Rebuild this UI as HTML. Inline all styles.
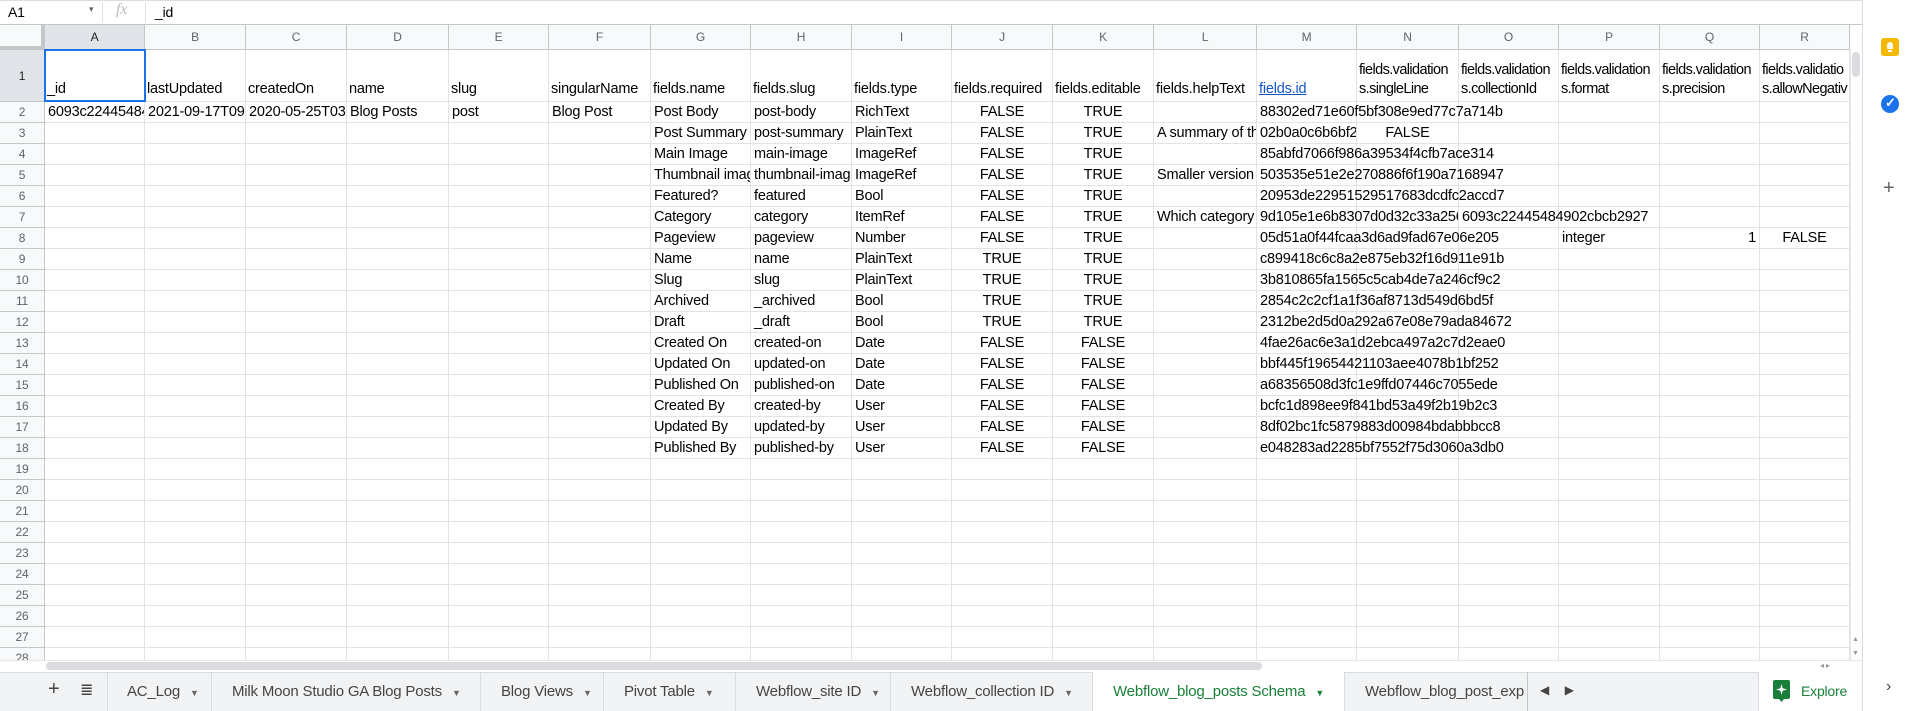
<!DOCTYPE html>
<html><head><meta charset="utf-8"><style>
*{box-sizing:border-box;margin:0;padding:0}
body{width:1914px;height:711px;overflow:hidden;background:#fff;font-family:"Liberation Sans",Arial,sans-serif;font-size:14.5px;letter-spacing:-0.2px;color:#000;position:relative}
.a{position:absolute}
.c{position:absolute;white-space:nowrap;overflow:hidden;padding:0 3px;line-height:21px}
.h{position:absolute;top:25px;height:25px;line-height:25px;text-align:center;color:#5f6368;font-size:12px;background:#f8f9fa;border-right:1px solid #c4c7c5;border-bottom:1px solid #c4c7c5}
.rh{position:absolute;left:0;width:45px;text-align:center;color:#5f6368;font-size:12px;background:#f8f9fa;border-right:1px solid #c4c7c5;border-bottom:1px solid #c4c7c5}
.tab{position:absolute;top:672px;height:39px;line-height:39px;font-size:15px;color:#444;border-right:1px solid #dadce0;padding-left:20px;white-space:nowrap;overflow:hidden}
.tab .dd{font-size:9px;color:#666;margin-left:10px}
</style></head><body>
<div class="a" style="left:0;top:0;width:1862px;height:1px;background:#dadce0"></div>
<div class="a" style="left:8px;top:4px;font-size:14px">A1</div>
<div class="a" style="left:89px;top:4px;font-size:9px;color:#666">▾</div>
<div class="a" style="left:102px;top:3px;width:1px;height:20px;background:#e0e0e0"></div>
<div class="a" style="left:116px;top:1px;font-family:'Liberation Serif',serif;font-style:italic;color:#bbb;font-size:16px">fx</div>
<div class="a" style="left:145px;top:3px;width:1px;height:20px;background:#e0e0e0"></div>
<div class="a" style="left:155px;top:4px;font-size:14px">_id</div>
<div class="a" style="left:0;top:24px;width:1862px;height:1px;background:#c4c7c5"></div>
<div id="g"></div>
<div class="a" style="left:1850px;top:50px;width:12px;height:612px;background:#fff;border-left:1px solid #e6e6e6"></div>
<div class="a" style="left:1852px;top:52px;width:8px;height:25px;background:#dadce0;border-radius:4px"></div>
<div class="a" style="left:1852px;top:636px;font-size:7px;color:#999">▲</div>
<div class="a" style="left:1852px;top:650px;font-size:7px;color:#999">▼</div>
<div class="a" style="left:0;top:660px;width:1862px;height:12px;background:#fff;border-top:1px solid #e6e6e6"></div>
<div class="a" style="left:46px;top:662px;width:1216px;height:8px;background:#dadce0;border-radius:4px"></div>
<div class="a" style="left:1820px;top:661px;font-size:8px;color:#999">◂ ▸</div>
<div class="a" style="left:0;top:672px;width:1862px;height:39px;background:#f1f3f4;border-top:1px solid #dadce0"></div>
<div class="a" style="left:48px;top:678px;font-size:20px;color:#444">+</div>
<div class="a" style="left:80px;top:680px;font-size:16px;color:#444">≣</div>
<div class="a" style="left:107px;top:672px;width:1px;height:39px;background:#dadce0"></div>
<div class="tab" style="left:107px;width:105px">AC_Log<span class="dd">▼</span></div>
<div class="tab" style="left:212px;width:269px">Milk Moon Studio GA Blog Posts<span class="dd">▼</span></div>
<div class="tab" style="left:481px;width:123px">Blog Views<span class="dd">▼</span></div>
<div class="tab" style="left:604px;width:132px">Pivot Table<span class="dd">▼</span></div>
<div class="tab" style="left:736px;width:155px">Webflow_site ID<span class="dd">▼</span></div>
<div class="tab" style="left:891px;width:202px">Webflow_collection ID<span class="dd">▼</span></div>
<div class="tab" style="left:1093px;width:252px;background:#fff;color:#188038">Webflow_blog_posts Schema<span class="dd" style="color:#188038">▼</span></div>
<div class="tab" style="left:1345px;width:183px;border-right:1px solid #c4c7c5">Webflow_blog_post_exp</div>
<div class="a" style="left:1540px;top:683px;font-size:12px;color:#444">◀&nbsp;&nbsp;&nbsp;&nbsp;&nbsp;▶</div>
<div class="a" style="left:1758px;top:672px;width:104px;height:39px;background:#fff;border-left:1px solid #dadce0"></div>
<svg class="a" style="left:1773px;top:680px" width="17" height="22" viewBox="0 0 17 22"><path d="M2 0h13a2 2 0 0 1 2 2v15a2 2 0 0 1-2 2h-4l-2.5 3-2.5-3H2a2 2 0 0 1-2-2V2a2 2 0 0 1 2-2z" fill="#188038"/><path d="M8.5 4l1.2 4.3 4.3 1.2-4.3 1.2-1.2 4.3-1.2-4.3-4.3-1.2 4.3-1.2z" fill="#fff"/></svg>
<div class="a" style="left:1801px;top:683px;color:#188038;font-size:14px">Explore</div>
<div class="a" style="left:1862px;top:0;width:52px;height:711px;background:#fff;border-left:1px solid #dadce0"></div>
<div class="a" style="left:1881px;top:38px;width:18px;height:18px;background:#f6b900;border-radius:3px"></div>
<div class="a" style="left:1887px;top:42px;width:6px;height:7px;background:#fff;border-radius:3px 3px 1px 1px"></div>
<div class="a" style="left:1888px;top:50px;width:4px;height:2px;background:#fff"></div>
<div class="a" style="left:1881px;top:95px;width:18px;height:18px;background:#1a73e8;border-radius:50%"></div>
<div class="a" style="left:1885px;top:95px;color:#fff;font-size:13px;font-weight:bold">✓</div>
<div class="a" style="left:1883px;top:177px;color:#666;font-size:20px">+</div>
<div class="a" style="left:1886px;top:678px;color:#444;font-size:16px">›</div>
<script>
var L=[45,145,246,347,449,549,651,751,852,952,1053,1154,1257,1357,1459,1559,1660,1760,1850];
var letters="ABCDEFGHIJKLMNOPQR";
var g=document.getElementById('g'),h='';
h+='<div class="a" style="left:0;top:25px;width:45px;height:25px;background:#f8f9fa;border-right:4px solid #c4c7c5;border-bottom:4px solid #c4c7c5"></div>';
for(var i=0;i<18;i++){h+='<div class="h" style="left:'+L[i]+'px;width:'+(L[i+1]-L[i])+'px;'+(i==0?'background:#e1e5ea;color:#222':'')+'">'+letters[i]+'</div>';}
function rt(r){return r==1?50:102+21*(r-2);}
function rhgt(r){return r==1?52:21;}
for(var r=1;r<=28;r++){var t=rt(r),hh=rhgt(r);
 h+='<div class="rh" style="top:'+t+'px;height:'+hh+'px;line-height:'+hh+'px;'+(r==1?'background:#e1e5ea;color:#222':'')+'">'+r+'</div>';
 h+='<div class="a" style="left:45px;top:'+(t+hh-1)+'px;width:1805px;height:1px;background:#e2e3e3"></div>';}
for(var i=1;i<19;i++){h+='<div class="a" style="left:'+(L[i]-1)+'px;top:50px;width:1px;height:610px;background:#e2e3e3"></div>';}
var hdr=["_id","lastUpdated","createdOn","name","slug","singularName","fields.name","fields.slug","fields.type","fields.required","fields.editable","fields.helpText","fields.id","fields.validation<br>s.singleLine","fields.validation<br>s.collectionId","fields.validation<br>s.format","fields.validation<br>s.precision","fields.validatio<br>s.allowNegativ"];
for(var i=0;i<18;i++){h+='<div class="a" style="left:'+L[i]+'px;top:50px;width:'+(L[i+1]-L[i]-1)+'px;height:51px;overflow:hidden;padding:0 2px 2px;display:flex;align-items:flex-end;line-height:19px;white-space:nowrap;'+(i>=13?'letter-spacing:-0.6px;':'')+(i==12?'color:#1155cc;text-decoration:underline':'')+'"><span>'+hdr[i]+'</span></div>';}
var D=[
["6093c22445484902cbcb2927","2021-09-17T09:00:00","2020-05-25T03:10:00","Blog Posts","post","Blog Post","Post Body","post-body","RichText","FALSE","TRUE","","88302ed71e60f5bf308e9ed77c7a714b"],
["","","","","","","Post Summary","post-summary","PlainText","FALSE","TRUE","A summary of the post","02b0a0c6b6bf26","FALSE"],
["","","","","","","Main Image","main-image","ImageRef","FALSE","TRUE","","85abfd7066f986a39534f4cfb7ace314"],
["","","","","","","Thumbnail image","thumbnail-image","ImageRef","FALSE","TRUE","Smaller version of","503535e51e2e270886f6f190a7168947"],
["","","","","","","Featured?","featured","Bool","FALSE","TRUE","","20953de22951529517683dcdfc2accd7"],
["","","","","","","Category","category","ItemRef","FALSE","TRUE","Which category does","9d105e1e6b8307d0d32c33a2565","","6093c22445484902cbcb2927"],
["","","","","","","Pageview","pageview","Number","FALSE","TRUE","","05d51a0f44fcaa3d6ad9fad67e06e205","","","integer","1","FALSE"],
["","","","","","","Name","name","PlainText","TRUE","TRUE","","c899418c6c8a2e875eb32f16d911e91b"],
["","","","","","","Slug","slug","PlainText","TRUE","TRUE","","3b810865fa1565c5cab4de7a246cf9c2"],
["","","","","","","Archived","_archived","Bool","TRUE","TRUE","","2854c2c2cf1a1f36af8713d549d6bd5f"],
["","","","","","","Draft","_draft","Bool","TRUE","TRUE","","2312be2d5d0a292a67e08e79ada84672"],
["","","","","","","Created On","created-on","Date","FALSE","FALSE","","4fae26ac6e3a1d2ebca497a2c7d2eae0"],
["","","","","","","Updated On","updated-on","Date","FALSE","FALSE","","bbf445f19654421103aee4078b1bf252"],
["","","","","","","Published On","published-on","Date","FALSE","FALSE","","a68356508d3fc1e9ffd07446c7055ede"],
["","","","","","","Created By","created-by","User","FALSE","FALSE","","bcfc1d898ee9f841bd53a49f2b19b2c3"],
["","","","","","","Updated By","updated-by","User","FALSE","FALSE","","8df02bc1fc5879883d00984bdabbbcc8"],
["","","","","","","Published By","published-by","User","FALSE","FALSE","","e048283ad2285bf7552f75d3060a3db0"]];
for(var r=0;r<D.length;r++){var row=D[r],t=rt(r+2);
 for(var i=0;i<row.length;i++){var v=row[i];if(!v)continue;
  var center=(v=="TRUE"||v=="FALSE"),right=(v=="1");
  var j=i+1;while(!center&&!right&&j<18&&!(row[j])&&j<i+4)j++;
  var w=L[j]-L[i]-1; if(center||right)w=L[i+1]-L[i]-1;
  h+='<div class="c" style="left:'+L[i]+'px;top:'+t+'px;width:'+w+'px;'+(center?'text-align:center;':'')+(right?'text-align:right;':'')+'">'+v+'</div>';}}
h+='<div class="a" style="left:44px;top:49px;width:102px;height:53px;border:2px solid #1a73e8"></div>';
g.innerHTML=h;
</script>
</body></html>
